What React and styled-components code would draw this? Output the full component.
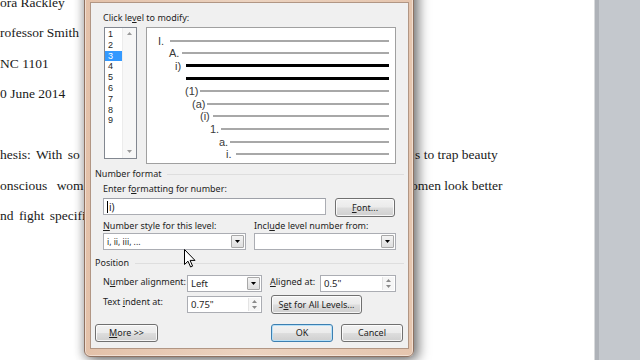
import styled, { createGlobalStyle } from "styled-components";

const GlobalStyle = createGlobalStyle`
  html, body {
    margin: 0;
    padding: 0;
    width: 640px;
    height: 360px;
    overflow: hidden;
    background: #fff;
  }
`;

const UI = `"Segoe UI", "Noto Sans", Lato, sans-serif`;

/* ---------- document behind the dialog ---------- */

const Page = styled.div`
  display: flex;
  width: 640px;
  height: 360px;
  position: relative;
  overflow: hidden;
`;

const Doc = styled.div`
  width: 594px;
  background: #fff;
  font-family: "Liberation Serif", "DejaVu Serif", serif;
  font-size: 13.5px;
  color: #1a1a1a;
`;

const DocText = styled.div`
  margin-top: -12.5px;
`;

const DocLine = styled.div`
  display: grid;
  grid-template-columns: ${(p) => p.$split || 594}px 1fr;
  height: 30.5px;
  line-height: 30.5px;
  white-space: nowrap;
`;

const DocLeft = styled.span`
  word-spacing: ${(p) => p.$spacing || 0}px;
`;

const Gutter = styled.div`
  flex: 1;
  background: #c4c8cd;
  border-left: 1px solid #d8dadc;
  box-shadow: inset 4px 0 0 #aeb2b8;
`;

/* ---------- dialog window ---------- */

const Frame = styled.div`
  position: absolute;
  left: 84px;
  top: -30px;
  width: 330px;
  height: 387px;
  box-sizing: border-box;
  padding: 31px 4px 7px 5px;
  border: 1px solid #8e7262;
  border-radius: 0 0 6px 6px;
  background: linear-gradient(90deg, #e3c1a9, #ecd3c0 50%, #e5c5ae);
  box-shadow: 5px 3px 12px rgba(0, 0, 0, 0.5), -3px 2px 8px rgba(0, 0, 0, 0.2),
    inset 0 0 0 1px rgba(255, 255, 255, 0.45);
`;

const Client = styled.div`
  position: relative;
  height: 100%;
  box-sizing: border-box;
  border: 1px solid #b19684;
  background: #f0f0f0;
  font-family: ${UI};
  font-size: 9px;
  color: #1e1e1e;
  display: flex;
  flex-direction: column;
`;

const Label = styled.div`
  line-height: 14px;
  height: 14px;
  margin: ${(p) => p.$mt || 0}px 0 0 ${(p) => p.$ml ?? 12}px;
  white-space: nowrap;
`;

const GroupLabel = styled.div`
  display: flex;
  align-items: center;
  gap: 6px;
  line-height: 14px;
  height: 14px;
  margin: ${(p) => p.$mt || 0}px 4px 0 4px;
  white-space: nowrap;

  &::after {
    content: "";
    flex: 1;
    height: 1px;
    background: #dedede;
  }
`;

const TopRow = styled.div`
  display: flex;
  align-items: flex-start;
  gap: 9px;
  margin-top: 2px;
  padding-left: 13px;
`;

const ListBox = styled.div`
  display: flex;
  width: 33px;
  height: 132px;
  box-sizing: border-box;
  border: 1px solid #828790;
  background: #fff;
`;

const ListItems = styled.div`
  width: 17px;
  padding-top: 1px;
  font-family: "Liberation Sans", Arial, sans-serif;
  font-size: 9px;
`;

const ListItem = styled.div`
  height: 10.8px;
  line-height: 10.8px;
  padding-left: 3px;
  background: ${(p) => (p.$selected ? "#3399ff" : "transparent")};
  color: ${(p) => (p.$selected ? "#fff" : "#1e1e1e")};
`;

const ScrollBar = styled.div`
  flex: 1;
  display: flex;
  flex-direction: column;
  justify-content: space-between;
  align-items: center;
  padding: 4px 0 5px;
  background: #f7f7f7;
  border-left: 1px solid #ececec;
`;

const Preview = styled.div`
  width: 250px;
  height: 137px;
  box-sizing: border-box;
  border: 1px solid #a0a0a0;
  background: #fff;
  padding-top: 6.5px;
  font-family: "Liberation Sans", Arial, sans-serif;
  font-size: 11px;
  color: #3a3a3a;
`;

const LevelRow = styled.div`
  display: flex;
  align-items: center;
  height: 12.6px;
  padding-left: ${(p) => p.$x}px;
  padding-right: 6px;
`;

const LevelLabel = styled.span`
  width: ${(p) => p.$w}px;
  flex: none;
  line-height: 12px;
`;

const LevelLine = styled.span`
  flex: 1;
  height: ${(p) => (p.$bold ? 3 : 2)}px;
  background: ${(p) => (p.$bold ? "#000" : "#a8a8a8")};
`;

const InputRow = styled.div`
  display: flex;
  align-items: flex-start;
  gap: 9px;
  height: 19px;
  margin-top: 2px;
  padding-left: 12px;
`;

const TextBox = styled.div`
  width: ${(p) => p.$w}px;
  height: ${(p) => p.$h || 17}px;
  box-sizing: border-box;
  border: 1px solid #abadb3;
  border-top-color: #9ea1a8;
  background: #fff;
  display: flex;
  align-items: center;
  padding-left: 3px;
  line-height: 14px;
  font-size: 10px;
`;

const Caret = styled.span`
  display: inline-block;
  width: 1px;
  height: 12px;
  background: #000;
  margin-right: 1px;
`;

const Button = styled.div`
  width: ${(p) => p.$w}px;
  height: ${(p) => p.$h || 18}px;
  box-sizing: border-box;
  border: 1px solid ${(p) => (p.$focus ? "#3c7fb1" : "#707070")};
  border-radius: 3px;
  background: linear-gradient(#f2f2f2 0%, #ebebeb 48%, #dddddd 52%, #cfcfcf 100%);
  box-shadow: inset 0 0 0 1px ${(p) => (p.$focus ? "#b6e0f8" : "rgba(255,255,255,0.8)")};
  display: flex;
  align-items: center;
  justify-content: center;
  line-height: 14px;
  white-space: nowrap;
  color: #1e1e1e;
`;

const PairGrid = styled.div`
  display: grid;
  grid-template-columns: 143px 142px;
  column-gap: 8px;
  padding-left: 12px;
  margin-top: ${(p) => p.$mt || 0}px;
  line-height: 14px;
`;

const Select = styled.div`
  position: relative;
  height: 17px;
  box-sizing: border-box;
  border: 1px solid #abadb3;
  background: #fff;
  display: flex;
  align-items: center;
  padding-left: 3px;
  font-size: ${(p) => (p.$small ? 8.5 : 9.5)}px;
`;

const DropButton = styled.span`
  position: absolute;
  right: 1px;
  top: 1px;
  bottom: 1px;
  width: 13px;
  box-sizing: border-box;
  border: 1px solid #a8a8a8;
  border-radius: 1px;
  background: linear-gradient(#f4f4f4, #dedede);
  display: flex;
  align-items: center;
  justify-content: center;
`;

const Spin = styled.span`
  position: absolute;
  right: 1px;
  top: 1px;
  bottom: 1px;
  width: 11px;
  display: flex;
  flex-direction: column;
  align-items: center;
  justify-content: space-around;
  border-left: 1px solid #e4e4e4;
  background: #f6f6f6;
`;

const PosGrid = styled.div`
  display: grid;
  grid-template-columns: 84px 75px 58px 76px;
  grid-template-rows: 17px 19px;
  row-gap: 3px;
  margin-top: 5px;
  padding-left: 12px;
  align-items: center;
`;

const PosLabel = styled.span`
  padding-left: ${(p) => p.$pl || 0}px;
  line-height: 14px;
  white-space: nowrap;
  align-self: ${(p) => (p.$top ? "start" : "center")};
`;

const WideCell = styled.div`
  grid-column: 3 / span 2;
  padding-left: 9px;
`;

const ButtonRow = styled.div`
  display: flex;
  justify-content: space-between;
  margin-top: 10px;
  padding: 0 5px 0 4px;
`;

const ButtonGroup = styled.div`
  display: flex;
  gap: 8px;
`;

const Cursor = styled.svg`
  position: absolute;
  left: 93px;
  top: 246px;
`;

const Tri = ({ up, color = "#000", w = 5 }) => (
  <svg width={w} height="3" viewBox="0 0 5 3">
    <path d={up ? "M0 3 L2.5 0 L5 3 Z" : "M0 0 L5 0 L2.5 3 Z"} fill={color} />
  </svg>
);

const levels = [
  { label: "I.", x: 11, w: 12 },
  { label: "A.", x: 22, w: 13 },
  { label: "i)", x: 28, w: 11, bold: true },
  { label: "", x: 39, w: 0, bold: true },
  { label: "(1)", x: 38, w: 15 },
  { label: "(a)", x: 45, w: 15 },
  { label: "(i)", x: 53, w: 13 },
  { label: "1.", x: 63, w: 11 },
  { label: "a.", x: 72, w: 11 },
  { label: "i.", x: 79, w: 10 },
];

const docLines = [
  { left: "ora Rackley" },
  { left: "rofessor Smith" },
  { left: "NC 1101" },
  { left: "0 June 2014" },
  { left: "" },
  { left: "hesis: With so m", right: "s to trap beauty", split: 415, spacing: 2 },
  { left: "onscious women", right: "omen look better", split: 411, spacing: 6 },
  { left: "nd fight specific", spacing: 2 },
];

const Dialog = () => (
  <Frame>
    <Client>
      <Label $mt={8}>
        Click le<u>v</u>el to modify:
      </Label>
      <TopRow>
        <ListBox>
          <ListItems>
            {[1, 2, 3, 4, 5, 6, 7, 8, 9].map((n) => (
              <ListItem key={n} $selected={n === 3}>
                {n}
              </ListItem>
            ))}
          </ListItems>
          <ScrollBar>
            <Tri up color="#9a9a9a" />
            <Tri color="#9a9a9a" />
          </ScrollBar>
        </ListBox>
        <Preview>
          {levels.map((l, i) => (
            <LevelRow key={i} $x={l.x}>
              <LevelLabel $w={l.w}>{l.label}</LevelLabel>
              <LevelLine $bold={l.bold} />
            </LevelRow>
          ))}
        </Preview>
      </TopRow>

      <GroupLabel $mt={3}>Number format</GroupLabel>
      <Label $mt={1}>
        Enter f<u>o</u>rmatting for number:
      </Label>
      <InputRow>
        <TextBox $w={223}>
          <Caret />
          i)
        </TextBox>
        <Button $w={60} $h={19}>
          <span>
            <u>F</u>ont...
          </span>
        </Button>
      </InputRow>
      <PairGrid $mt={2}>
        <span>
          <u>N</u>umber style for this level:
        </span>
        <span>
          Incl<u>u</u>de level number from:
        </span>
      </PairGrid>
      <PairGrid>
        <Select $small>
          i, ii, iii, ...
          <DropButton>
            <Tri />
          </DropButton>
        </Select>
        <Select>
          <DropButton>
            <Tri />
          </DropButton>
        </Select>
      </PairGrid>

      <GroupLabel $mt={6}>Position</GroupLabel>
      <PosGrid>
        <PosLabel $top>
          N<u>u</u>mber alignment:
        </PosLabel>
        <Select>
          Left
          <DropButton>
            <Tri />
          </DropButton>
        </Select>
        <PosLabel $pl={8} $top>
          <u>A</u>ligned at:
        </PosLabel>
        <Select>
          0.5"
          <Spin>
            <Tri up color="#8a8a8a" />
            <Tri color="#8a8a8a" />
          </Spin>
        </Select>

        <PosLabel $top>
          Text <u>i</u>ndent at:
        </PosLabel>
        <Select>
          0.75"
          <Spin>
            <Tri up color="#8a8a8a" />
            <Tri color="#8a8a8a" />
          </Spin>
        </Select>
        <WideCell>
          <Button $w={91} $h={19}>
            <span>
              S<u>e</u>t for All Levels...
            </span>
          </Button>
        </WideCell>
      </PosGrid>

      <ButtonRow>
        <Button $w={63}>
          <span>
            <u>M</u>ore &gt;&gt;
          </span>
        </Button>
        <ButtonGroup>
          <Button $w={62} $focus>
            OK
          </Button>
          <Button $w={62}>Cancel</Button>
        </ButtonGroup>
      </ButtonRow>

      <Cursor width="12" height="19" viewBox="0 0 12 19">
        <path
          d="M0.5 0.5 L0.5 15.5 L4 12.2 L6.6 18 L8.6 17.1 L6.1 11.4 L11 11.4 Z"
          fill="#fff"
          stroke="#000"
          strokeWidth="1"
          strokeLinejoin="round"
        />
      </Cursor>
    </Client>
  </Frame>
);

const App = () => (
  <>
    <GlobalStyle />
    <Page>
      <Doc>
        <DocText>
          {docLines.map((l, i) => (
            <DocLine key={i} $split={l.split}>
              <DocLeft $spacing={l.spacing}>{l.left}</DocLeft>
              {l.right ? <span>{l.right}</span> : null}
            </DocLine>
          ))}
        </DocText>
      </Doc>
      <Gutter />
      <Dialog />
    </Page>
  </>
);

export default App;
